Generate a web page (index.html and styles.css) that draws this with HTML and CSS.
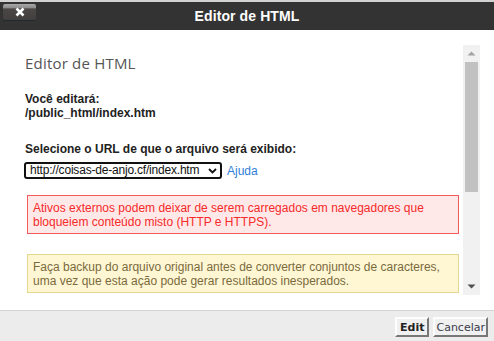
FILE: index.html
```html
<!DOCTYPE html>
<html lang="pt-BR">
<head>
<meta charset="utf-8">
<title>Editor de HTML</title>
<link rel="stylesheet" href="styles.css">
</head>
<body>
<div class="dialog">
  <div class="titlebar">
    <button class="close-btn" aria-label="Fechar">
      <svg width="12" height="10" viewBox="0 0 12 10"><path d="M2.5 1.5 L9.5 8.5 M9.5 1.5 L2.5 8.5" stroke="#fff" stroke-width="2.6" stroke-linecap="butt"/></svg>
    </button>
    <div class="title">Editor de HTML</div>
  </div>
  <div class="dialog-body">
    <div class="scroll-area">
      <h2 class="heading">Editor de HTML</h2>
      <p class="info">Você editará:<br>/public_html/index.htm</p>
      <p class="label">Selecione o URL de que o arquivo será exibido:</p>
      <div class="url-row">
        <div class="select-wrap">
          <select class="url-select">
            <option>http://coisas-de-anjo.cf/index.htm</option>
          </select>
          <svg class="chev" width="9" height="6" viewBox="0 0 9 6"><path d="M1 1 L4.5 4.5 L8 1" fill="none" stroke="#111" stroke-width="1.8"/></svg>
        </div>
        <a class="help" href="#">Ajuda</a>
      </div>
      <div class="alert alert-error">Ativos externos podem deixar de serem carregados em navegadores que<br>bloqueiem conteúdo misto (HTTP e HTTPS).</div>
      <div class="alert alert-warn">Faça backup do arquivo original antes de converter conjuntos de caracteres,<br>uma vez que esta ação pode gerar resultados inesperados.</div>
    </div>
    <div class="scrollbar">
      <div class="sb-btn"><svg width="9" height="5" viewBox="0 0 9 5"><path d="M0.5 4.5 L4.5 0.5 L8.5 4.5 Z" fill="#a3a3a3"/></svg></div>
      <div class="sb-track"><div class="sb-thumb"></div></div>
      <div class="sb-btn"><svg width="9" height="5" viewBox="0 0 9 5"><path d="M0.5 0.5 L4.5 4.5 L8.5 0.5 Z" fill="#505050"/></svg></div>
    </div>
  </div>
  <div class="footer">
    <button class="btn btn-edit">Edit</button>
    <button class="btn">Cancelar</button>
  </div>
</div>
</body>
</html>
```
FILE: styles.css
```css
html, body {
  margin: 0;
  padding: 0;
  background: #fff;
}
body {
  font-family: "Liberation Sans", Arial, sans-serif;
  font-size: 12px;
  color: #222;
}
.dialog {
  width: 494px;
  height: 341px;
  display: flex;
  flex-direction: column;
}
.titlebar {
  position: relative;
  height: 28px;
  border-top: 2px solid #d2d2d2;
  background: #333333;
  display: flex;
  align-items: center;
  justify-content: center;
}
.title {
  color: #fff;
  font-weight: bold;
  font-size: 14px;
  letter-spacing: 0.1px;
}
.close-btn {
  position: absolute;
  left: 3px;
  top: 2px;
  width: 33px;
  height: 16px;
  padding: 0;
  border: none;
  border-radius: 2px;
  background: linear-gradient(#a9a9a9 0%, #8a8a8a 25%, #4a4747 30%, #433f3f 100%);
  box-shadow: 0 1px 0 #1f2a30;
  display: flex;
  align-items: center;
  justify-content: center;
}
.dialog-body {
  height: 280px;
  box-sizing: border-box;
  padding: 15px 14px 15px 0;
  display: flex;
}
.scroll-area {
  flex: 1;
  overflow: hidden;
  padding: 0 4px 0 25px;
}
.heading {
  margin: 8px 0 0;
  font-family: "Open Sans", sans-serif;
  font-weight: 400;
  font-size: 15px;
  line-height: 20px;
  letter-spacing: 0.2px;
  color: #555;
}
.info {
  margin: 19px 0 0;
  font-weight: bold;
  line-height: 14px;
  color: #222;
}
.label {
  margin: 22px 0 0;
  font-weight: bold;
  line-height: 14px;
  color: #222;
}
.url-row {
  display: flex;
  align-items: center;
  margin-top: 6px;
  margin-left: -1px;
}
.select-wrap {
  position: relative;
  display: flex;
}
.url-select {
  appearance: none;
  -webkit-appearance: none;
  width: 198px;
  height: 17px;
  box-sizing: border-box;
  border: 2px solid #111;
  border-radius: 3px;
  background: #fff;
  padding: 0 0 0 4px;
  margin: 0;
  font-family: "Liberation Sans", Arial, sans-serif;
  font-size: 12px;
  letter-spacing: -0.2px;
  line-height: 13px;
  color: #111;
}
.chev {
  position: absolute;
  right: 5px;
  top: 6px;
  pointer-events: none;
}
.help {
  margin-left: 5px;
  color: #2f7fd8;
  text-decoration: none;
  font-size: 12px;
}
.alert {
  margin: 16px 0 0 2px;
  border: 1px solid;
  padding: 5px 5px 4px;
  line-height: 14px;
}
.alert-error {
  background: #ffe8e8;
  border-color: #f05a5a;
  color: #f52a2a;
}
.alert-warn {
  margin-top: 20px;
  background: #fff7d4;
  border-color: #e3d98c;
  color: #7a6a3c;
}
.scrollbar {
  width: 17px;
  background: #f1f1f1;
  display: flex;
  flex-direction: column;
}
.sb-btn {
  height: 17px;
  display: flex;
  align-items: center;
  justify-content: center;
}
.sb-track {
  flex: 1;
  padding: 0 2px;
}
.sb-thumb {
  height: 130px;
  background: #c1c1c1;
}
.footer {
  flex: 1;
  border-top: 1px solid #d4d4d4;
  background: #ececec;
  display: flex;
  justify-content: flex-end;
  align-items: flex-start;
  gap: 4px;
  padding: 6px 6px 0 0;
}
.btn {
  height: 20px;
  box-sizing: border-box;
  margin: 0;
  padding: 0 1px;
  background: #f0f0f0;
  border: 2px solid;
  border-color: #fdfdfd #777 #777 #fdfdfd;
  font-family: "DejaVu Sans", Verdana, sans-serif;
  font-size: 11px;
  color: #3a3a4a;
}
.btn-edit {
  font-weight: bold;
  color: #222;
  padding: 0 3px;
}
```
